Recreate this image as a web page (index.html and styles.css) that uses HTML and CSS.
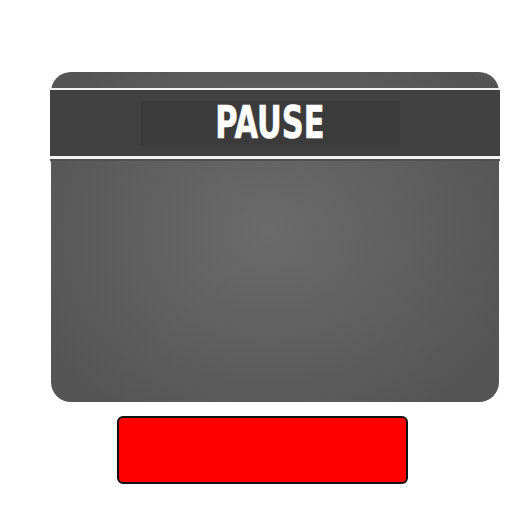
FILE: index.html
```html
<!DOCTYPE html>
<html>
<head>
<meta charset="utf-8">
<link rel="stylesheet" href="styles.css">
</head>
<body>
<div class="stage">
  <div class="panel">
    <div class="band">
      <div class="title-box"><span class="title">PAUSE</span></div>
    </div>
  </div>
  <div class="button"></div>
</div>
</body>
</html>
```
FILE: styles.css
```css
html, body {
  margin: 0;
  padding: 0;
  background: #ffffff;
}
.stage {
  width: 512px;
  height: 512px;
  display: flex;
  flex-direction: column;
  align-items: flex-start;
}
.panel {
  margin-top: 72px;
  margin-left: 51px;
  width: 448px;
  height: 330px;
  border-radius: 20px;
  background: radial-gradient(ellipse 260px 220px at 219px 160px, #6b6b6b 0%, #5f5f5f 55%, #555555 100%);
  padding-top: 16px;
  box-sizing: border-box;
}
.band {
  margin: 0 -1px;
  height: 66px;
  background: #414141;
  border-top: 2px solid #f2f2f2;
  border-bottom: 3px solid #f2f2f2;
  box-shadow: 0 2px 0 #505050;
  display: flex;
  align-items: center;
  padding-left: 91px;
}
.title-box {
  width: 259px;
  height: 44px;
  background: #3b3b3b;
  display: flex;
  align-items: center;
  justify-content: center;
}
.title {
  font-family: "DejaVu Sans Condensed", "DejaVu Sans", sans-serif;
  font-weight: bold;
  font-size: 44px;
  line-height: 44px;
  color: #ffffff;
  -webkit-text-stroke: 0.6px #ffffff;
  transform: scaleX(0.77);
  display: inline-block;
  margin-left: -1px;
  margin-top: 0px;
}
.button {
  margin-top: 14px;
  margin-left: 117px;
  width: 291px;
  height: 68px;
  box-sizing: border-box;
  background: #ff0000;
  border: 2px solid #111111;
  border-radius: 6px;
}
```
